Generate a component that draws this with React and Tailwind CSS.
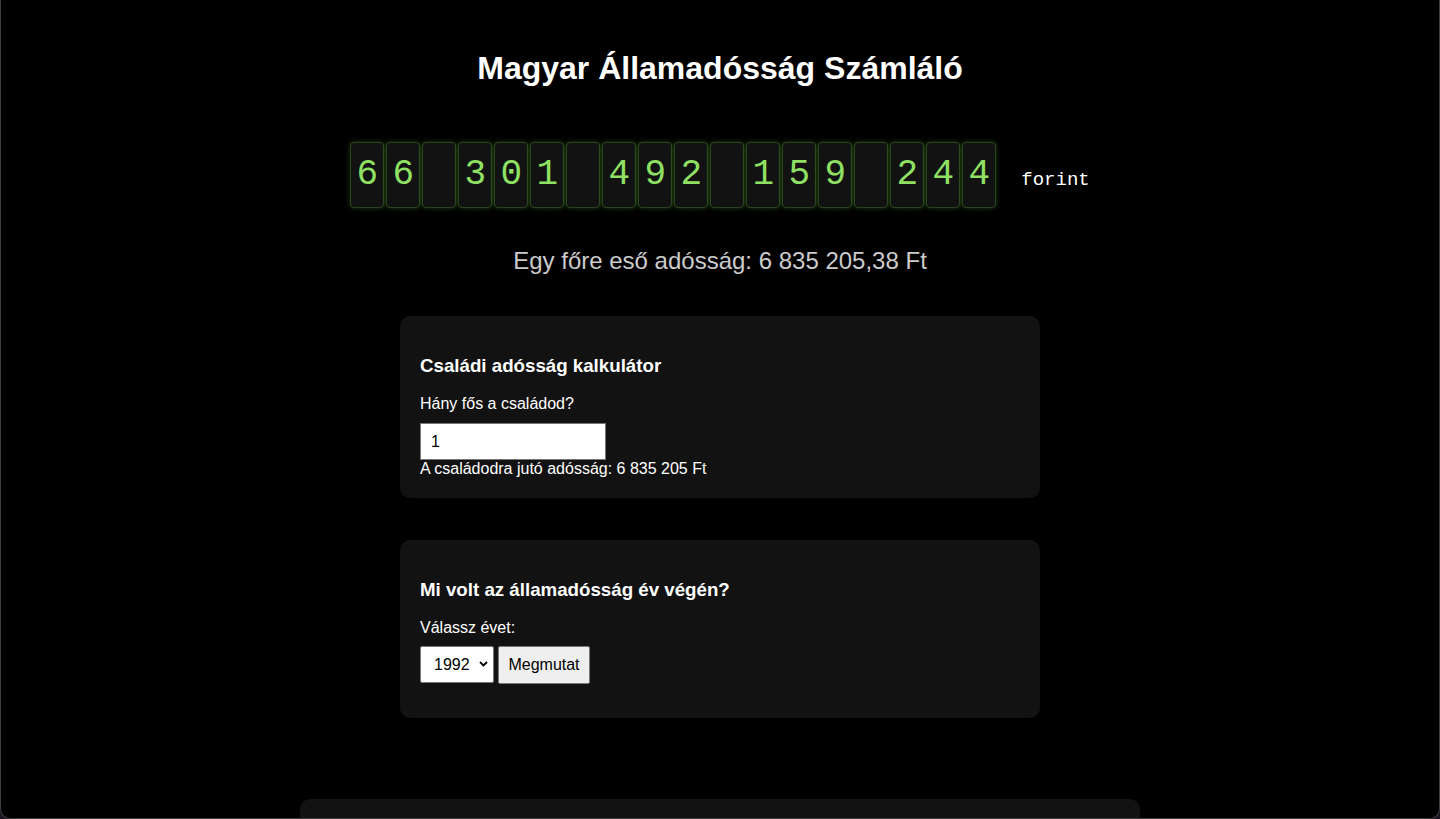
import React from "react";

const groups = ["66", "301", "492", "159", "244"];

function DigitBox({ ch }) {
  return (
    <div className="w-[34px] h-[66px] flex items-center justify-center bg-[#121212] border border-[#2a441d] rounded-[4px] shadow-[0_0_5px_rgba(110,220,60,0.28)] text-[#8fe063] text-[36px] leading-none font-['Liberation_Mono',monospace]">
      {ch}
    </div>
  );
}

export default function App() {
  const chars = [];
  groups.forEach((g, gi) => {
    if (gi > 0) chars.push(" ");
    g.split("").forEach((c) => chars.push(c));
  });

  return (
    <div className="w-full h-[819px] bg-[#1b1526] font-['Liberation_Sans',Arial,sans-serif]">
      <div className="w-full h-[819px] overflow-hidden bg-black border-l border-r border-b border-[#3d3d3d] rounded-b-[10px] flex flex-col items-center text-white">
        <h1 className="mt-[50px] text-[32px] leading-[37px] font-bold text-white">
          Magyar Államadósság Számláló
        </h1>

        <div className="mt-[55px] flex items-center">
          <div className="flex gap-[2px]">
            {chars.map((c, i) => (
              <DigitBox key={i} ch={c === " " ? "\u00a0" : c} />
            ))}
          </div>
          <span className="ml-[25px] mt-[10px] text-[19px] leading-none text-white font-['Liberation_Mono',monospace]">
            forint
          </span>
        </div>

        <div className="mt-[39px] text-[24px] leading-[28px] text-[#cccccc]">
          Egy főre eső adósság: 6 835 205,38 Ft
        </div>

        <div className="mt-[41px] w-[640px] bg-[#121212] rounded-[10px] px-5 pt-[39px] pb-5">
          <h3 className="text-[18.72px] leading-[22px] font-bold">Családi adósság kalkulátor</h3>
          <div className="mt-[18px] text-[16px] leading-[18px]">Hány fős a családod?</div>
          <input
            type="number"
            defaultValue="1"
            className="mt-[10px] block w-[186px] h-[37px] bg-white text-black border border-[#767676] px-[10px] text-[16px] outline-none [appearance:textfield]"
          />
          <div className="text-[16px] leading-[18px]">A családodra jutó adósság: 6 835 205 Ft</div>
        </div>

        <div className="mt-[42px] w-[640px] bg-[#121212] rounded-[10px] px-5 pt-[39px] pb-[34px]">
          <h3 className="text-[18.72px] leading-[22px] font-bold">Mi volt az államadósság év végén?</h3>
          <div className="mt-[18px] text-[16px] leading-[18px]">Válassz évet:</div>
          <div className="mt-[9px] flex gap-[4px] items-start">
            <div className="relative w-[74px] h-[37px]">
              <select className="w-[74px] h-[37px] appearance-none bg-white text-black border border-[#767676] rounded-[2px] pl-[13px] text-[16px] outline-none">
                <option>1992</option>
              </select>
              <svg className="absolute right-[6px] top-[15px] pointer-events-none" width="9" height="6" viewBox="0 0 9 6">
                <path d="M1 1l3.5 3.5L8 1" fill="none" stroke="#000" strokeWidth="1.8" />
              </svg>
            </div>
            <button className="w-[92px] h-[38px] bg-[#efefef] text-black border border-[#767676] rounded-[2px] text-[16px]">
              Megmutat
            </button>
          </div>
        </div>

        <div className="mt-[81px] w-[840px] h-[60px] bg-[#121212] rounded-[10px] shrink-0" />
      </div>
    </div>
  );
}
